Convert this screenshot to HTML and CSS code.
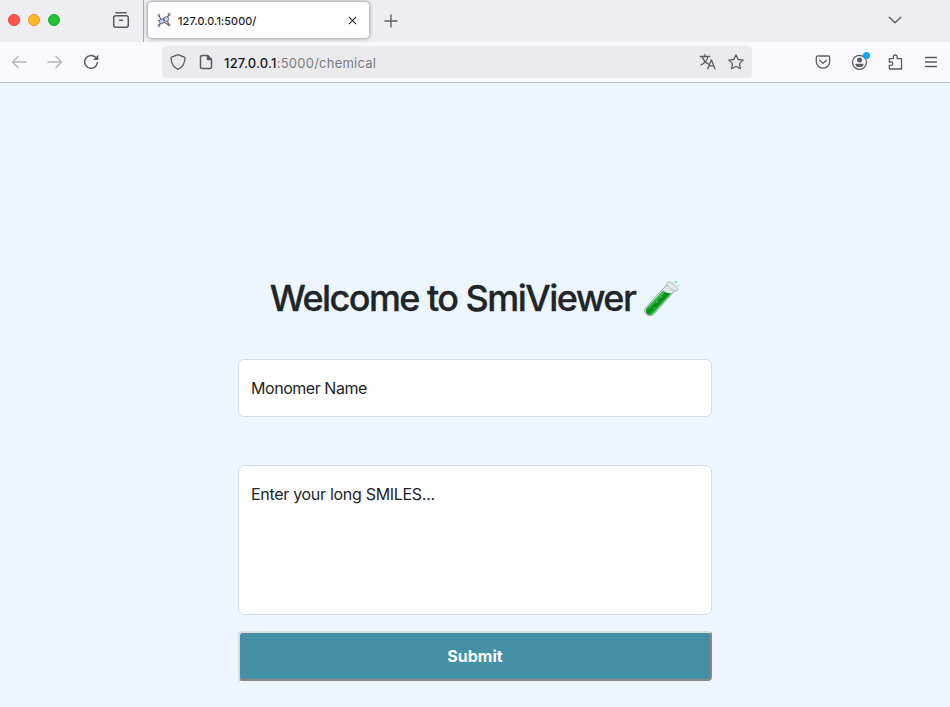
FILE: index.html
```html
<!DOCTYPE html>
<html lang="en">
<head>
<meta charset="utf-8">
<title>SmiViewer</title>
<link rel="stylesheet" href="styles.css">
</head>
<body>
<header class="tabs">
  <div class="lights"><i class="red"></i><i class="yellow"></i><i class="green"></i></div>
  <svg class="icon archive" viewBox="0 0 16 16"><path d="M2.800.8h10.400"/><rect x=".7" y="3.700" width="14.600" height="11.500" rx="2"/><path d="M6.500 8.300h3"/></svg>
  <span class="divider"></span>
  <div class="tab">
    <svg class="molecule" viewBox="0 0 16 16"><path class="bond" d="M2 3l3 6.500 5-2.500 3-5M5 9.500L2 14M10 7l3 6.500M1 8.500l4 1 3-4.500M7 10l6 3.500"/><g class="atoms"><circle cx="2" cy="3" r="1"/><circle cx="13" cy="2" r="1.2"/><circle cx="2" cy="14" r="1.2"/><circle cx="13" cy="13.500" r="1"/><circle cx="5" cy="9.500" r="2.600"/><circle cx="10" cy="7" r="2.600"/></g></svg>
    <span class="tab-title">127.0.0.1:5000/</span>
    <svg class="close" viewBox="0 0 10 10"><path d="M1 1l8 8M9 1L1 9"/></svg>
  </div>
  <svg class="icon plus" viewBox="0 0 12 12"><path d="M6 0v12M0 6h12"/></svg>
  <svg class="icon chevron" viewBox="0 0 14 8"><path d="M1.2 1.2L7 6.800l5.800-5.600"/></svg>
</header>
<nav class="toolbar">
  <svg class="icon faded back" viewBox="0 0 16 16"><path d="M15 8H1.500M7 2.500L1.500 8 7 13.500"/></svg>
  <svg class="icon faded forward" viewBox="0 0 16 16"><path d="M1 8h13.500M9 2.500L14.500 8 9 13.500"/></svg>
  <svg class="icon reload" viewBox="0 0 16 16"><path d="M12.800 3.600A6.400 6.400 0 1 0 14.400 8.500"/><path class="fill" d="M15.300.8v4.700q0 .5-.5.500h-4.700z"/></svg>
  <div class="address">
    <svg class="icon" viewBox="0 0 16 16"><path d="M8 .7l6.300 2.500c.6.300.8.700.7 1.300-.4 5.100-2.500 8.900-7 10.800C3.500 13.400 1.400 9.600 1 4.500c-.1-.6.1-1 .7-1.300z"/></svg>
    <svg class="icon page" viewBox="0 0 16 16"><path d="M4 1.500h5.500l4 4V13a1.500 1.500 0 0 1-1.500 1.500H4A1.500 1.500 0 0 1 2.500 13V3A1.500 1.500 0 0 1 4 1.500z"/><path class="solid" d="M9.500 1.500v4h4z"/></svg>
    <span class="url"><b>127.0.0.1</b>:5000/chemical</span>
    <svg class="icon translate" viewBox="0 0 16 16"><path d="M.3 2.500h9.500M5 .3v2.200M2.300 2.500C3 6 5.500 8.500 8.500 10M7.900 2.500C7.300 6.500 4.500 9.500.8 11M7.800 14.800l3.600-9 3.600 9M9 11.800h4.800"/></svg>
    <svg class="icon star" viewBox="0 0 16 16"><path d="M8 .9l2.100 4.600 5.100.6-3.700 3.500.9 5.100L8 12.300l-4.400 2.400.9-5.100L.8 6.100l5.100-.6z"/></svg>
  </div>
  <div class="tools">
    <svg class="icon" viewBox="0 0 16 16"><path d="M2.700 2h10.600c.8 0 1.400.6 1.400 1.400V7.500a6.700 6.700 0 0 1-13.400 0V3.400C1.300 2.600 1.900 2 2.700 2z"/><path d="M4.700 6.300L8 9.400l3.300-3.100"/></svg>
    <span class="account"><svg class="icon" viewBox="0 0 16 16"><circle cx="8.500" cy="8.300" r="7"/><circle class="fill" cx="8.500" cy="6.100" r="2.500"/><path class="fill" d="M4.500 9.800h8v.7c0 1.600-1.700 2.600-4 2.600s-4-1-4-2.600z"/></svg><i class="badge"></i></span>
    <svg class="icon" viewBox="0 0 16 16"><path d="M3 15h11.500V4.700h-4.300V2.900a1.900 1.900 0 0 0-3.800 0v1.800H2.300V8h1.800a1.700 1.700 0 0 1 0 3.400H2.300v2.900c0 .4.300.7.700.7z"/></svg>
    <svg class="icon" viewBox="0 0 16 16"><path d="M2.500 3.500h11M2.500 8h11M2.500 12.500h11"/></svg>
  </div>
</nav>
<main>
  <h1><span>Welcome to SmiViewer</span><svg class="tube" viewBox="0 0 36 38">
    <defs><linearGradient id="liquid" gradientUnits="userSpaceOnUse" x1="10" y1="17" x2="18" y2="25"><stop offset="0" stop-color="#58c653"/><stop offset=".3" stop-color="#13ac22"/><stop offset=".65" stop-color="#078316"/><stop offset="1" stop-color="#2bd43a"/></linearGradient></defs>
    <path class="glass" d="M23.500 4L1.500 27.800c-3.300 5 3.300 10.800 8.200 6.600L31.500 10z"/>
    <path fill="url(#liquid)" d="M19 10.500L2.500 28.300c-2.800 4.300 2.600 9 6.500 5.600l18.700-21c-2.700.8-6.100 0-8.700-2.400z"/>
    <path class="shine" d="M20 12L5 28"/><path class="rim" d="M23 2.800c1.200-2 4.200-.5 7.200 1.800s4.400 4.700 3 6-4.600-.4-7.100-2.400-4.100-3.800-3.100-5.400z"/>
    <g class="bubbles"><circle cx="32" cy="2" r="1.300"/><circle cx="34.500" cy="5.500" r=".8"/><circle cx="13" cy="22" r=".7"/><circle cx="18" cy="17" r=".6"/><circle cx="10" cy="28" r=".6"/></g>
  </svg></h1>
  <form>
    <div class="field name">Monomer Name</div>
    <div class="field smiles">Enter your long SMILES...</div>
    <button type="button">Submit</button>
  </form>
</main>
</body>
</html>
```
FILE: styles.css
```css
* { box-sizing: border-box; }
body { margin: 0; height: 707px; overflow: hidden; background: #edf6ff; color: #212529; font-family: Inter, "Liberation Sans", sans-serif; }
svg { display: block; flex: none; overflow: visible; }
.icon { width: 16px; height: 16px; fill: none; stroke: #5b5b66; stroke-width: 1.3; stroke-linecap: round; stroke-linejoin: round; }
.icon .solid, .icon .fill { fill: #5b5b66; }
.icon .fill { stroke: none; }
.tabs { height: 42px; display: flex; align-items: center; background: #eeedf2; }
.lights { display: flex; gap: 8px; margin: 0 53px 2px 8px; }
.lights i { width: 12px; height: 12px; border: 1px solid #e04440; border-radius: 50%; background: #ff5450; }
.lights .yellow { background: #ffb429; border-color: #e29b20; }
.lights .green { background: #24c138; border-color: #1baa2c; }
.archive { margin: 0 14px 2px 0; stroke-width: 1.5; }
.divider { width: 1px; height: 42px; background: #aaa9af; margin-right: 4px; }
.tab { width: 221px; height: 36px; margin-bottom: 2px; padding: 0 12px 0 9px; border-radius: 4px; background: #fff; box-shadow: 0 0 4px #77777e; display: flex; align-items: center; }
.molecule { width: 15px; height: 16px; }
.bond { fill: none; stroke: #62545c; stroke-width: 1.2; }
.atoms { fill: #bfcff0; stroke: #565b73; stroke-width: .8; }
.tab-title { margin: 2px auto 0 6px; font-size: 11px; line-height: 16px; color: #15141a; letter-spacing: .13px; -webkit-text-stroke: .15px; }
.close { width: 9px; height: 9px; fill: none; stroke: #29282e; stroke-width: 1.2; }
.plus { width: 12px; height: 12px; margin-left: 16px; }
.chevron { width: 14px; height: 8px; margin: 0 48px 2px auto; stroke-width: 1.4; }
.toolbar { height: 41px; display: flex; align-items: center; background: #f9f9fb; border-bottom: 1px solid #c2c2c5; }
.back { margin-left: 11px; }
.forward { margin-left: 20px; }
.reload { margin-left: 20px; stroke-width: 1.5; }
.faded { stroke: #b5b5bb; }
.address { width: 590px; height: 32px; margin-left: 63px; padding: 0 8px; border-radius: 4px; background: #ebebed; display: flex; align-items: center; }
.page { margin-left: 12px; stroke-width: 1.5; }
.url { margin: 1px auto 0 10px; color: #7c7c82; font-size: 13px; line-height: 20px; letter-spacing: .23px; }
.url b { color: #18171d; font-weight: 500; }
.star { margin-left: 12px; }
.tools { display: flex; gap: 20px; margin-left: 63px; }
.account { position: relative; }
.badge { position: absolute; top: -2px; right: -3px; width: 7px; height: 7px; border-radius: 50%; background: #06a7f7; }
main { width: 474px; margin: 0 auto; padding-top: 193px; }
h1 { margin: 0; height: 45px; display: flex; justify-content: center; align-items: center; font-size: 36px; line-height: 45px; font-weight: 500; letter-spacing: -1.56px; white-space: nowrap; -webkit-text-stroke: .3px #212529; }
.tube { width: 36px; height: 38px; margin-left: 9px; }
.glass { fill: #ddeaea; stroke: #778b82; stroke-width: .7; }
.shine { fill: none; stroke: #8bdf87; stroke-width: .6; }
.rim { fill: #e5ebed; stroke: #a5afb4; stroke-width: .8; }
.bubbles { fill: #8de1a6; }
form { display: flex; flex-direction: column; margin-top: 38px; }
.field { border: 1px solid #d6dde5; border-radius: 6px; background: #fff; padding: 16px 12px; font-size: 16px; line-height: 24px; letter-spacing: -.3px; }
.name { height: 58px; letter-spacing: -.45px; }
.smiles { height: 150px; margin-top: 48px; }
button { height: 50px; margin-top: 16px; padding: 0; border: 2px solid; border-color: #dedede #8b8787 #8b8787 #dedede; border-radius: 4px; background: #4491a6; color: #fff; font: 700 16px/24px Inter, "Liberation Sans", sans-serif; letter-spacing: 0; }
```
